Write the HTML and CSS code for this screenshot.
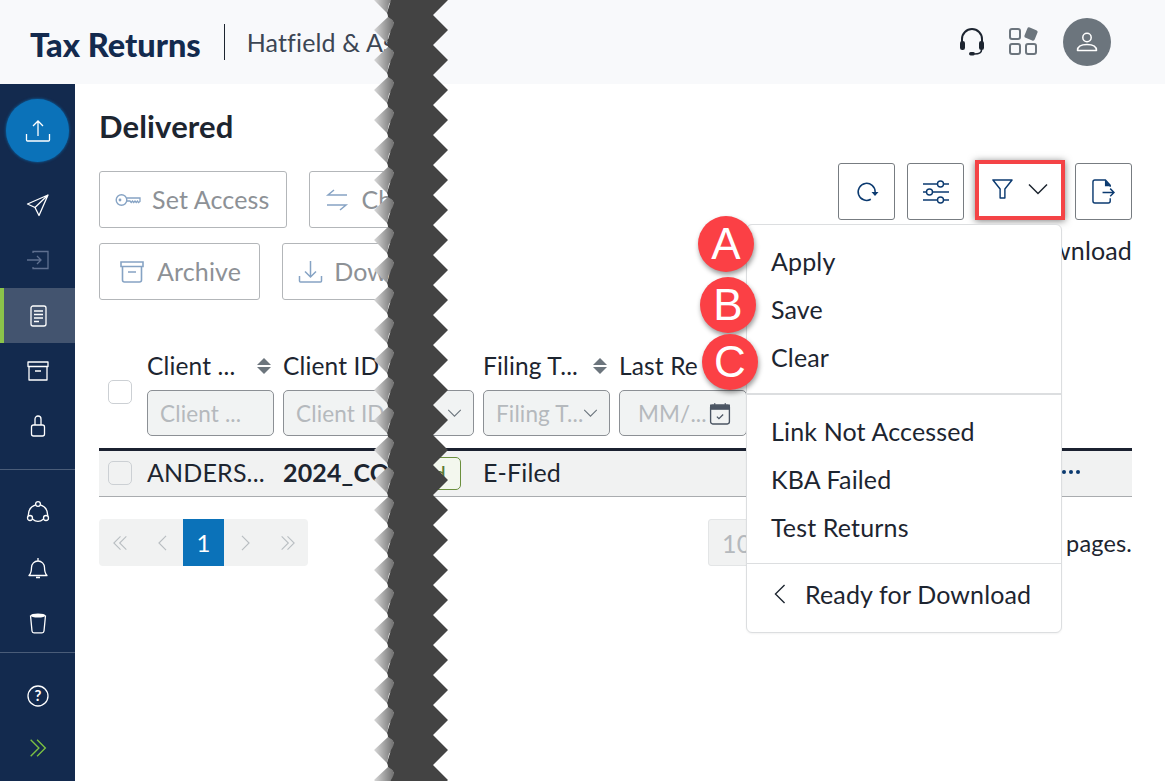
FILE: index.html
```html
<!DOCTYPE html>
<html lang="en">
<head>
<meta charset="utf-8">
<title>Tax Returns</title>
<link rel="stylesheet" href="styles.css">
</head>
<body>
<div class="page">
  <header class="topbar">
    <div class="brand">Tax Returns</div>
    <div class="firm">Hatfield &amp; As</div>
    <div class="top-icons">
      <svg class="ico-head" viewBox="0 0 26 30"><path d="M3 16V12a10 10 0 0 1 20 0v4" fill="none" stroke="#1d2530" stroke-width="2"/><rect x="1" y="14" width="5" height="9" rx="2.2" fill="#1d2530"/><rect x="20" y="14" width="5" height="9" rx="2.2" fill="#1d2530"/><path d="M22.5 23c0 3-2.5 4-7 4" fill="none" stroke="#1d2530" stroke-width="1.6"/><rect x="10" y="25" width="6" height="3.4" rx="1.7" fill="#1d2530"/></svg>
      <svg class="ico-apps" viewBox="0 0 30 30"><g fill="none" stroke="#6c757d" stroke-width="2"><rect x="1" y="2" width="10" height="10" rx="2"/><rect x="1" y="17" width="10" height="10" rx="2"/><rect x="17" y="17" width="10" height="10" rx="2"/></g><rect x="16.5" y="1.5" width="11" height="11" rx="2" fill="#6c757d" transform="rotate(22 22 7)"/></svg>
      <div class="avatar"><svg viewBox="0 0 24 24" width="24" height="24"><circle cx="12" cy="7.5" r="4.2" fill="none" stroke="#fff" stroke-width="1.5"/><path d="M2.5 20.5c0-4.5 3.5-6 9.500-6s9.500 1.500 9.500 6z" fill="none" stroke="#fff" stroke-width="1.500" stroke-linejoin="round"/></svg></div>
    </div>
  </header>
  <div class="layout">
    <nav class="sidebar">
      <div class="upload"><svg viewBox="0 0 26 26" width="26" height="26"><path d="M13 3v15M8 8l5-5 5 5M1.500 16v6a1 1 0 0 0 1 1h21a1 1 0 0 0 1-1v-6" fill="none" stroke="#fff" stroke-width="1.300"/></svg></div>
      <div class="nav-item nav-first"><svg viewBox="0 0 24 24"><path d="M22 2 1.500 11 9 14.500 13 22.500zM22 2 9 14.500" fill="none" stroke="#fff" stroke-width="1.300" stroke-linejoin="round"/></svg></div>
      <div class="nav-item"><svg viewBox="0 0 24 24"><path d="M7 5V3.500h15v17H7V19M1 12h14M11 8l4 4-4 4" fill="none" stroke="#5f7090" stroke-width="1.300"/></svg></div>
      <div class="nav-item active"><svg viewBox="0 0 24 24"><rect x="5" y="2" width="15" height="20" rx="2" fill="none" stroke="#fff" stroke-width="1.300"/><path d="M8 7h9M8 10.500h9M8 14h9M8 17.500h5" stroke="#fff" stroke-width="1.300"/></svg></div>
      <div class="nav-item"><svg viewBox="0 0 24 24"><path d="M2 3h20v4.500H2zM3 7.500V21h18V7.500M9 12h6" fill="none" stroke="#fff" stroke-width="1.300" stroke-linejoin="round"/></svg></div>
      <div class="nav-item"><svg viewBox="0 0 24 24"><rect x="5.500" y="11" width="13" height="11" rx="2" fill="none" stroke="#fff" stroke-width="1.300"/><path d="M9 11V5a3 3 0 0 1 6 0v6" fill="none" stroke="#fff" stroke-width="1.300"/></svg></div>
      <hr class="nav-rule rule-one">
      <div class="nav-item"><svg viewBox="0 0 24 24"><g fill="none" stroke="#fff" stroke-width="1.300"><circle cx="12" cy="4" r="2.400"/><circle cx="4" cy="18" r="2.500"/><circle cx="20" cy="18" r="2.500"/><path d="M9.700 4.800C5.300 6 2.300 10 2.200 15.800M14.300 4.800c4.400 1.200 7.400 5.200 7.500 11M6.400 19c3.500 3 7.700 3 11.200 0"/></g></svg></div>
      <div class="nav-item"><svg viewBox="0 0 24 24"><path d="M3 19.500c2-2 2.500-4 2.500-8a6.500 6.500 0 0 1 13 0c0 4 .5 6 2.500 8zM12 2v3M10 21.500h4" fill="none" stroke="#fff" stroke-width="1.300" stroke-linejoin="round"/></svg></div>
      <div class="nav-item"><svg viewBox="0 0 24 24"><path d="M4.500 4.500 6 20a2 2 0 0 0 2 1.800h8a2 2 0 0 0 2-1.800l1.500-15.500" fill="none" stroke="#fff" stroke-width="1.300"/><ellipse cx="12" cy="4.500" rx="7.500" ry="2" fill="#fff"/></svg></div>
      <hr class="nav-rule rule-two">
      <div class="nav-item"><svg viewBox="0 0 24 24"><circle cx="12" cy="12" r="10" fill="none" stroke="#fff" stroke-width="1.300"/><text x="12" y="17" text-anchor="middle" class="help-mark">?</text></svg></div>
      <div class="nav-item nav-last"><svg viewBox="0 0 24 24"><path d="M4 3l9 9-9 9M11 3l9 9-9 9" fill="none" stroke="#7cc142" stroke-width="1.500"/></svg></div>
    </nav>
    <main class="main">
      <h1 class="title">Delivered</h1>
      <div class="toolbar">
        <div class="actions">
          <button class="btn"><svg class="btn-ico key" viewBox="0 0 26 14"><circle cx="6.500" cy="7" r="5.300" fill="none" stroke="#86a3c4" stroke-width="1.400"/><circle cx="5" cy="7" r="1.400" fill="#86a3c4"/><path d="M11.800 5H25v3.500l-1.500 1-1-1.500-1.300 1.500-1.200-1.500-1.300 1.500-1.200-1.500-1.300 1.500-1.200-1.500h-3.200" fill="none" stroke="#86a3c4" stroke-width="1.300"/></svg>Set Access</button>
          <button class="btn btn-tight"><svg class="btn-ico swap" viewBox="0 0 24 24"><path d="M22 7H3l6-5M2 17h19l-6 5" fill="none" stroke="#86a3c4" stroke-width="1.500"/></svg>Cha</button>
          <button class="btn btn-archive"><svg class="btn-ico box" viewBox="0 0 24 24"><path d="M1 2h22v4.500H1zM2.500 6.500V20a2 2 0 0 0 2 2h15a2 2 0 0 0 2-2V6.500M8 12h8" fill="none" stroke="#86a3c4" stroke-width="1.600"/></svg>Archive</button>
          <button class="btn btn-tight"><svg class="btn-ico down" viewBox="0 0 24 24"><path d="M12 1v16M6.500 11.500 12 17l5.500-5.500M1 16v5a1 1 0 0 0 1 1h20a1 1 0 0 0 1-1v-5" fill="none" stroke="#86a3c4" stroke-width="1.500"/></svg>Down</button>
        </div>
        <div class="tools">
          <div class="tool-row">
            <button class="tool"><svg viewBox="0 0 24 24" width="24" height="24"><path d="M20 10.500A8.500 8.500 0 1 0 17 18.500" fill="none" stroke="#0b3a70" stroke-width="1.500" transform="rotate(10 12 12)"/><path d="M16.500 12h7l-3.500 4z" fill="#0b3a70"/></svg></button>
            <button class="tool"><svg viewBox="0 0 26 24" width="26" height="24"><g fill="none" stroke="#0b3a70" stroke-width="1.400"><path d="M0 4h14.500M20.500 4H26M0 12h3.500M9.500 12H26M0 20h14.500M20.500 20H26"/><circle cx="17.500" cy="4" r="3"/><circle cx="6.500" cy="12" r="3"/><circle cx="17.500" cy="20" r="3"/></g></svg></button>
            <div class="filter-box">
              <svg viewBox="0 0 22 22" width="21" height="22"><path d="M1 1.500h20L13.500 11v9.500h-5V11z" fill="none" stroke="#0b3a70" stroke-width="1.500" stroke-linejoin="round"/></svg>
              <svg viewBox="0 0 20 12" width="20" height="12"><path d="M1 1.500l9 9 9-9" fill="none" stroke="#1d2530" stroke-width="1.500"/></svg>
            </div>
            <button class="tool"><svg viewBox="0 0 24 26" width="23" height="25"><path d="M19 8V6.500L14 1H3a2 2 0 0 0-2 2v20a2 2 0 0 0 2 2h14a2 2 0 0 0 2-2v-3" fill="none" stroke="#0b3a70" stroke-width="1.500"/><path d="M13.500 1l6 6.500h-6z" fill="#0b3a70"/><path d="M11 14h12M19 10l4 4-4 4" fill="none" stroke="#0b3a70" stroke-width="1.500"/></svg></button>
          </div>
          <div class="ready">Ready for Download</div>
        </div>
      </div>
      <div class="grid-table">
        <div class="t-head">
          <span class="box-check"></span>
          <div class="col col-client"><div class="label"><span>Client ...</span><i class="sort"></i></div><div class="field">Client ...</div></div>
          <div class="col col-id"><div class="label"><span>Client ID</span></div><div class="field">Client ID</div></div>
          <div class="col col-status"><div class="label"></div><div class="field field-select"><svg class="chev" viewBox="0 0 16 10"><path d="M1 1l7 7 7-7" fill="none" stroke="#6c757d" stroke-width="1.200"/></svg></div></div>
          <div class="col col-type"><div class="label"><span>Filing T...</span><i class="sort"></i></div><div class="field field-select">Filing T...<svg class="chev" viewBox="0 0 16 10"><path d="M1 1l7 7 7-7" fill="none" stroke="#6c757d" stroke-width="1.200"/></svg></div></div>
          <div class="col col-date"><div class="label"><span>Last Re</span></div><div class="field field-date">MM/...<svg class="cal" viewBox="0 0 20 22"><rect x="1" y="3" width="18" height="18" rx="2" fill="none" stroke="#4b5563" stroke-width="1.300"/><path d="M1 3h18v4H1zM5 1v3M15 1v3" fill="#4b5563" stroke="#4b5563"/><path d="M7 14l2 2 4-4" fill="none" stroke="#4b5563" stroke-width="1.200"/></svg></div></div>
        </div>
        <div class="t-row">
          <span class="box-check box-row"></span>
          <div class="cell col-client">ANDERS...</div>
          <div class="cell col-id strong">2024_CO</div>
          <div class="cell col-status cell-tag"><span class="tag">Filed</span></div>
          <div class="cell col-type">E-Filed</div>
          <div class="dots"><i></i><i></i><i></i></div>
        </div>
      </div>
      <div class="footer">
        <div class="pager">
          <span class="pg"><svg viewBox="0 0 18 18" width="15" height="16"><path d="M9 1 1 9l8 8M16 1 8 9l8 8" fill="none" stroke="#b9bec2" stroke-width="1.300"/></svg></span>
          <span class="pg"><svg viewBox="0 0 10 18" width="9" height="16"><path d="M9 1 1 9l8 8" fill="none" stroke="#b9bec2" stroke-width="1.300"/></svg></span>
          <span class="pg pg-on">1</span>
          <span class="pg"><svg viewBox="0 0 10 18" width="9" height="16"><path d="M1 1l8 8-8 8" fill="none" stroke="#b9bec2" stroke-width="1.300"/></svg></span>
          <span class="pg"><svg viewBox="0 0 18 18" width="15" height="16"><path d="M2 1l8 8-8 8M9 1l8 8-8 8" fill="none" stroke="#b9bec2" stroke-width="1.300"/></svg></span>
        </div>
        <div class="page-size">10</div>
        <div class="page-count">pages.</div>
      </div>
    </main>
  </div>

  <div class="menu">
    <ul class="menu-group">
      <li>Apply</li><li>Save</li><li>Clear</li>
    </ul>
    <ul class="menu-group group-thick">
      <li>Link Not Accessed</li><li>KBA Failed</li><li>Test Returns</li>
    </ul>
    <div class="menu-back"><svg viewBox="0 0 12 22" width="12" height="20"><path d="M11 1 1 11l10 10" fill="none" stroke="#1d2530" stroke-width="1.500"/></svg>Ready for Download</div>
  </div>
  <span class="callout call-a">A</span>
  <span class="callout call-b">B</span>
  <span class="callout call-c">C</span>

  <svg class="tear" viewBox="0 0 75 781" width="75" height="781">
    <defs>
      <linearGradient id="tearShade" x1="0" x2="1" y1="0" y2="0">
        <stop offset="0" stop-color="#d8d8d8"/><stop offset="1" stop-color="#6f6f6f"/>
      </linearGradient>
      <pattern id="tearTile" patternUnits="userSpaceOnUse" width="75" height="30">
        <path d="M1 0 15 -13Q21 -10 21 -6Q20 0 16 4L14 13Z" fill="url(#tearShade)"/>
        <path d="M1 30 15 17Q21 20 21 24Q20 30 16 34L14 43Z" fill="url(#tearShade)"/>
        <path d="M18 0Q16 6 14 13Q15 15 15 17Q19 19 21 23Q20 27 18 30H75L60 15 75 0Z" fill="#434343"/>
      </pattern>
    </defs>
    <rect width="75" height="781" fill="url(#tearTile)"/>
  </svg>
</div>
</body>
</html>
```
FILE: styles.css
```css
* { box-sizing: border-box; }
html, body { margin: 0; padding: 0; background: #fff; }
body { font-family: "Lato", "Open Sans", sans-serif; color: #1d2530; font-size: 25px; letter-spacing: 0.15px; }
.page { position: relative; width: 1165px; height: 781px; overflow: hidden; }

.topbar { height: 84px; background: #f8f9fb; display: flex; align-items: center; padding: 0 54px 0 30px; }
.brand { font-weight: 900; font-size: 32.500px; color: #132a4e; letter-spacing: 0; padding-top: 4px; white-space: nowrap; }
.firm { margin-left: 23px; padding-left: 22px; border-left: 1px solid #1d2530; height: 36px; line-height: 36px; color: #3c4654; font-size: 25px; white-space: nowrap; }
.top-icons { margin-left: auto; display: flex; align-items: center; }
.ico-head { width: 26px; height: 30px; }
.ico-apps { width: 30px; height: 30px; margin-left: 24px; }
.avatar { width: 48px; height: 48px; border-radius: 50%; background: #6c757d; margin-left: 24px; display: flex; align-items: center; justify-content: center; }

.layout { display: flex; height: 697px; }
.sidebar { width: 75px; flex: none; background: #132a4e; padding-top: 15px; display: flex; flex-direction: column; align-items: stretch; }
.upload { width: 63px; height: 63px; border-radius: 50%; background: #0b72b9; margin-left: 6px; display: flex; align-items: center; justify-content: center; box-shadow: 0 0 3px #0b72b9; flex: none; }
.nav-item { height: 55.500px; flex: none; display: flex; align-items: center; justify-content: center; border-left: 4px solid transparent; padding-right: 4px; }
.nav-item svg { width: 24px; height: 24px; }
.nav-first { margin-top: 15px; }
.nav-last { margin-top: -3px; }
.nav-last svg { width: 22px; height: 22px; }
.active { background: #43546f; border-left-color: #8bc34a; height: 55px; }
.nav-rule { border: 0; border-top: 1px solid #4a5c78; margin: 0; width: 100%; flex: none; }
.rule-one { margin-top: 14.500px; margin-bottom: 15px; }
.rule-two { margin-top: 1px; margin-bottom: 15px; }
.help-mark { fill: #fff; font-size: 15px; font-weight: 700; font-family: "Lato", sans-serif; }

.main { flex: 1; padding: 23px 33px 0 24px; min-width: 0; }
.title { margin: 0; font-size: 31px; line-height: 38px; font-weight: 700; color: #1d2530; }
.toolbar { display: flex; justify-content: space-between; align-items: flex-start; margin-top: 18px; }
.actions { width: 360px; display: flex; flex-wrap: wrap; gap: 15px 22px; margin-top: 8px; }
.btn { height: 57px; border: 1px solid #b3b6b9; border-radius: 3px; background: #fff; font: inherit; letter-spacing: inherit; color: #8d9196; display: inline-flex; align-items: center; padding: 0 16px 2px 15px; }
.btn-ico { margin-right: 11px; flex: none; position: relative; top: 1px; }
.key { width: 26px; height: 14px; }
.swap { width: 24px; height: 24px; margin-right: 13px; }
.box { width: 24px; height: 24px; margin-left: 5px; margin-right: 13px; }
.down { width: 25px; height: 24px; }
.btn-tight { padding-right: 15px; }
.btn-archive { padding-right: 18px; }

.tools { display: flex; flex-direction: column; align-items: flex-end; }
.tool-row { display: flex; align-items: center; gap: 12px; }
.tool { width: 57px; height: 57px; border: 1px solid #777c81; border-radius: 3px; background: #fff; display: flex; align-items: center; justify-content: center; padding: 0; }
.filter-box { width: 90px; height: 60px; margin: -3px -2px 0 -1px; border: 4px solid #f44346; box-shadow: 0 1px 7px rgba(0,0,0,.5); display: flex; align-items: center; justify-content: space-between; padding: 0 13px 2px 13px; background: #fff; }
.ready { color: #1d2530; margin-top: 14px; line-height: 32px; white-space: nowrap; }

.grid-table { margin-top: 48px; }
.t-head { display: flex; align-items: flex-start; position: relative; padding-left: 48px; gap: 9px; border-bottom: 3px solid #1b2130; height: 103px; }
.t-row { display: flex; align-items: center; height: 46px; padding: 0 0 3px 48px; gap: 9px; background: #f1f2f2; border-bottom: 1px solid #a9acaf; position: relative; }
.box-check { position: absolute; left: 9px; top: 32px; width: 24px; height: 24px; border: 1px solid #ccd0d4; border-radius: 5px; background: #fff; }
.box-row { top: 10px; background: #f1f2f2; }
.col-client { width: 127px; }
.col-id { width: 127px; }
.col-status { width: 55px; }
.col-type { width: 127px; }
.col-date { width: 128px; flex: none; }
.col, .cell { flex: none; }
.label { height: 32px; line-height: 32px; display: flex; justify-content: space-between; align-items: center; margin-top: 2px; white-space: nowrap; font-size: 24.500px; }
.sort { display: block; width: 14px; height: 16px; position: relative; margin-right: 3px; }
.sort::before, .sort::after { content: ""; position: absolute; left: 0; border-left: 7px solid transparent; border-right: 7px solid transparent; }
.sort::before { top: 0; border-bottom: 7px solid #6c757d; }
.sort::after { bottom: 0; border-top: 7px solid #6c757d; }
.field { height: 46px; margin-top: 8px; border: 1px solid #8c9095; border-radius: 5px; background: #f1f3f3; color: #b5b9bd; padding: 0 12px; display: flex; align-items: center; white-space: nowrap; overflow: hidden; font-size: 22.500px; }
.field-select { justify-content: space-between; padding-right: 11px; }
.field-date { justify-content: space-between; padding-left: 18px; padding-right: 15px; }
.chev { width: 15px; height: 9px; flex: none; margin-left: auto; }
.cal { width: 22px; height: 23px; flex: none; }
.strong { font-weight: 700; white-space: nowrap; }
.cell { white-space: nowrap; }
.cell-tag { display: flex; justify-content: flex-end; padding-right: 13px; padding-top: 3px; }
.tag { display: inline-block; height: 33px; line-height: 31px; padding: 0 14px 0 6px; border: 1px solid #6b8f3d; border-radius: 5px; background: #f3f7ee; color: #5a7a33; font-size: 22px; }
.dots { margin-left: auto; margin-right: 52px; display: flex; gap: 3px; }
.dots i { width: 4px; height: 4px; border-radius: 50%; background: #0b3a70; }

.footer { display: flex; align-items: center; margin-top: 22px; }
.pager { display: flex; height: 47px; background: #f1f2f2; border-radius: 4px; overflow: hidden; color: #fff; flex: none; }
.pg { width: 42px; display: flex; align-items: center; justify-content: center; }
.pg-on { background: #0b72b9; width: 41px; font-size: 24px; }
.page-size { width: 100px; height: 47px; margin-left: 400px; border: 1px solid #e3e5e6; border-radius: 3px; background: #f1f2f2; color: #b5b9bd; display: flex; align-items: center; padding-left: 13px; }
.page-count { margin-left: auto; font-size: 23.500px; }

.menu { position: absolute; left: 746px; top: 224px; width: 316px; height: 409px; background: #fff; border: 1px solid #dcdee0; border-radius: 6px; box-shadow: 0 1px 2px rgba(0,0,0,.05); }
.menu-group { list-style: none; margin: 0; padding: 12px 0 12px 24px; }
.menu-group li { height: 48px; line-height: 48px; }
.group-thick { border-top: 2px solid #dcdee0; border-bottom: 1px solid #dcdee0; padding-top: 12px; padding-bottom: 12px; }
.menu-back { display: flex; align-items: center; gap: 19px; padding: 11px 0 0 27px; height: 48px; line-height: 36px; }

.callout { position: absolute; width: 56px; height: 56px; border-radius: 50%; background: #fb4045; color: #fff; font-family: "Liberation Sans", sans-serif; font-size: 44px; line-height: 56px; text-align: center; box-shadow: 1px 3px 5px rgba(0,0,0,.4); letter-spacing: 0; }
.call-a { left: 698px; top: 216px; }
.call-b { left: 700px; top: 277px; }
.call-c { left: 702px; top: 334px; }

.tear { position: absolute; left: 373px; top: 0; display: block; }
```
